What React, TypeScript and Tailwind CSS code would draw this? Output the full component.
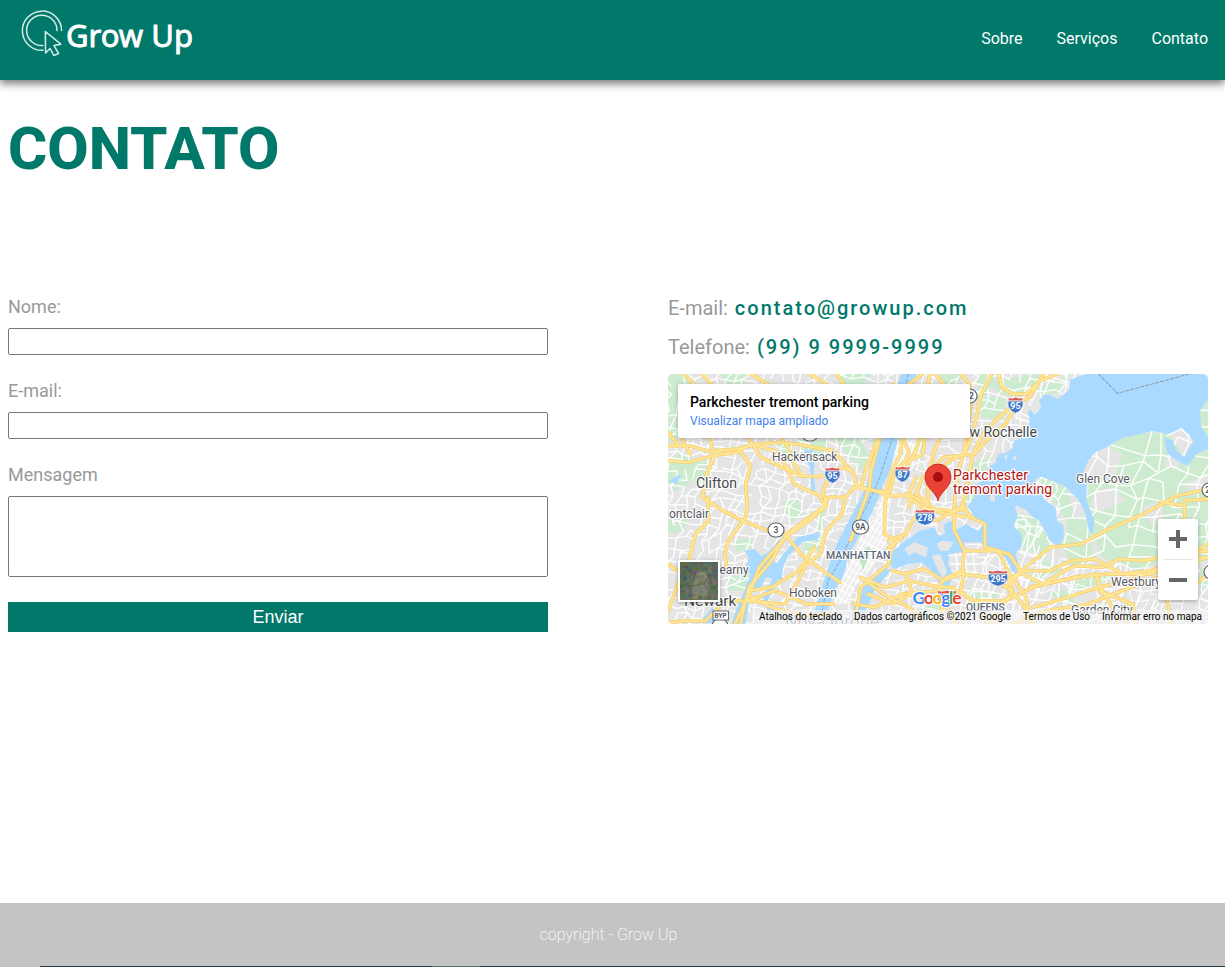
import React from "react";

/* ---------- Map geometry (drawn on a 1568 x 750 grid, scaled to 540 x 250) ---------- */

function seeded(seed: number) {
  let s = seed;
  return () => {
    s = (s * 16807) % 2147483647;
    return s / 2147483647;
  };
}

function streetMesh(x0: number, y0: number, x1: number, y1: number, step: number, keep: number, seed: number) {
  const rnd = seeded(seed);
  const rows: number[][][] = [];
  for (let y = y0; y <= y1; y += step) {
    const row: number[][] = [];
    for (let x = x0; x <= x1; x += step) {
      row.push([x + (rnd() - 0.5) * step * 0.8 - (y - y0) * 0.25, y + (rnd() - 0.5) * step * 0.8 + (x - x0) * 0.12]);
    }
    rows.push(row);
  }
  let d = "";
  rows.forEach((row, j) =>
    row.forEach((p, i) => {
      const at = (q: number[]) => `${q[0].toFixed(0)} ${q[1].toFixed(0)}`;
      if (i + 1 < row.length && rnd() < keep) d += `M${at(p)}L${at(row[i + 1])}`;
      if (j + 1 < rows.length && rnd() < keep) d += `M${at(p)}L${at(rows[j + 1][i])}`;
    })
  );
  return d;
}

const WEST_STREETS = streetMesh(-40, -160, 1240, 790, 25, 0.74, 4711);
const EAST_STREETS = streetMesh(1080, -90, 1820, 790, 46, 0.72, 977);
const QUEENS_STREETS = streetMesh(1040, 540, 1680, 790, 25, 0.55, 313);

const PARKS = [
  "M0 0H55L70 30H30V150L0 140Z", "M150 0H235L215 30H165Z", "M500 0H590L560 35H500Z",
  "M0 255L40 235L80 260L60 330L20 350L0 330Z", "M45 270L110 260L120 310L80 330Z", "M0 150L30 150L28 200L0 205Z",
  "M370 195L470 200L450 260L420 230L390 240Z", "M480 190L560 195L585 250L560 290L520 240Z", "M590 195L612 195L600 240Z",
  "M700 195L750 195L740 260L710 240Z", "M790 0L860 0L840 30H800Z", "M900 0H950L930 60L895 80Z",
  "M930 20L1080 0L1060 50L1010 70L960 60Z", "M900 70L985 70L970 140L910 130Z", "M1060 50L1170 0L1130 60L1080 60Z",
  "M890 265L945 240L920 300L895 320L880 290Z", "M860 330L905 330L885 400L860 370Z", "M640 185L690 190L670 235L640 240Z",
  "M330 385L375 370L390 420L355 450Z", "M440 400L460 395L450 460L430 490Z", "M400 490L445 480L440 530L390 540Z",
  "M0 440L60 430L45 470L0 480Z", "M190 500L240 490L245 520L200 535Z", "M300 200L350 205L370 250L340 260Z",
  "M550 550L585 510L600 520L575 590L540 600Z", "M870 640L920 660L960 650L940 700L880 690Z", "M740 700L790 690L800 740L740 740Z",
  "M1010 420L1070 430L1110 500L1090 570L1040 570L1020 520Z", "M1065 300L1160 335L1220 400L1235 560L1170 575L1140 500L1120 380L1080 360Z",
  "M1225 230L1350 180L1450 175L1500 250L1568 230V560L1450 550L1370 590L1260 550L1240 500L1215 380Z",
  "M1020 590L1100 560L1150 590L1100 600L1060 630Z", "M1180 620L1300 590L1280 620L1180 650Z", "M1540 90L1568 70V200L1545 160Z",
  "M1450 610L1568 580V640L1480 650Z", "M1110 650L1170 650L1180 690L1130 690Z", "M180 610L240 595L230 650L170 650Z"
];

/* Built-up pockets inside the north-shore parkland */
const TOWNS = [
  "M1225 230L1275 215L1320 240L1300 300L1230 330L1215 290Z", "M1240 350L1290 340L1330 380L1260 410L1225 400Z",
  "M1380 400L1430 380L1440 430L1400 450Z", "M1100 400L1130 390L1160 450L1150 500L1110 480Z", "M1160 345L1200 380L1215 440L1180 430Z",
  "M1450 230L1500 240L1480 280L1440 280Z", "M1010 520L1080 540L1090 600L1010 600Z", "M1500 330L1568 300V350L1520 360Z"
];

const WATER = [
  "M676 0H722L690 130L668 190L645 290L622 340L608 380L585 430L552 490L524 550L508 610L485 645L467 700L460 750H412L432 690L447 640L462 590L490 510L525 440L560 370L590 300L612 200L640 120Z",
  "M1215 0L1185 10L1168 18L1165 48L1130 75L1110 62L1090 62L1072 90L1078 110L1062 122L1055 105L1045 115L1050 140L1035 190L1005 200L1000 222L985 235L960 240L950 265L925 285L905 325L885 340L890 372L870 395L890 430L920 450L900 470L865 450L840 465L820 440L800 452L805 480L785 485L775 460L730 470L690 500L655 530L635 555L655 585L700 570L735 565L765 590L790 630L815 640L826 610L815 540L860 535L860 505L905 505L930 525L960 525L985 560L998 590L1012 600L1018 570L1010 540L1026 515L1028 485L1003 455L1015 430L1008 395L1035 405L1060 430L1078 440L1090 465L1110 500L1132 520L1150 490L1148 455L1130 440L1125 400L1095 380L1080 355L1065 315L1085 308L1150 335L1190 375L1212 415L1222 470L1233 480L1238 440L1215 380L1216 320L1205 300L1220 260L1240 235L1275 220L1290 210L1325 190L1375 180L1405 170L1450 180L1475 175L1490 160L1512 180L1525 200L1500 248L1475 230L1465 200L1440 188L1450 240L1485 265L1510 275L1535 240L1568 225V190L1548 160L1545 110L1568 75V0Z",
  "M285 540L340 480L330 520L300 560L335 575L330 620L285 610L265 650L225 640L240 600L225 585L235 550L220 530L250 525L270 545Z",
  "M320 560L375 490L440 475L435 495L390 505L350 545L325 600L290 680L320 720L290 710L275 670L300 620Z",
  "M200 700L235 620L265 610L240 660L225 750H185Z", "M90 745L130 700L150 750Z", "M0 320L40 300L25 330Z",
  "M395 230L418 225L425 275L420 330L410 275Z", "M412 300L424 300L428 360L417 355Z", "M625 575L645 590L600 650L570 720L540 750H520L560 650Z"
];

const ISLANDS = [
  "M685 525L715 505L755 520L750 550L715 535L700 545Z", "M780 510L795 500L830 505L815 530L790 530Z",
  "M820 540L880 530L910 570L900 610L830 600L812 570Z", "M765 545L790 540L810 590L800 615L780 580Z",
  "M935 360L950 365L948 385L935 380Z", "M975 245L985 240L983 260Z", "M1000 250L1012 245L1008 262Z",
  "M915 290L930 285L935 310L920 315Z", "M935 255L950 250L945 275Z", "M540 640L560 620L550 660Z",
  "M1055 85L1078 80L1085 100L1070 118L1055 110Z"
];

const MANHATTAN = "M668 200L720 195L725 250L660 330L640 420L640 500L600 570L540 650L520 690L480 690L500 620L540 540L560 490L600 430L620 370Z";

const MAJOR = [
  "M0 215L60 215L120 232L200 225L260 210L330 205L370 210L480 230L540 300L548 335L600 350L640 365L700 362L735 380L775 405L830 412L860 405",
  "M120 190L135 245L112 300L100 370L160 410L215 440L290 470L340 480L385 540L430 575L500 625",
  "M0 260L60 265L130 245L200 235L240 210L310 230L345 280L380 305L440 308L470 300L500 280L535 290",
  "M45 0L75 30M100 0L125 30M235 195L270 250L350 290L365 330L440 365L455 395",
  "M205 225L240 275L225 330L230 390L225 430L175 500L165 540L170 575",
  "M115 370L118 440L80 480L60 560L40 600L0 710",
  "M610 195L575 285L560 340L540 340L515 370L465 370L450 400L345 480L300 560L235 640L210 750",
  "M470 300L450 350L460 395L410 440L340 490L265 580L240 650L195 750",
  "M515 370L505 420L460 470L440 540L400 575L370 635L340 690",
  "M235 650L300 640L380 590L400 560L425 520",
  "M220 685L310 650L380 680L400 690L480 690", "M235 665L300 700L390 725L470 720", "M160 680L230 680L330 690",
  "M0 570L40 600M0 745L60 740L110 740L160 685",
  "M0 175L30 215M330 195L350 220L360 260L390 305M40 195L65 240",
  "M410 0L460 30M490 0L510 30M240 0L290 30",
  "M655 30L615 195L590 290L585 340L550 440L530 500",
  "M680 190L675 240L650 290L635 340L630 400L628 480L665 500L650 520L640 570L560 640L540 750",
  "M685 200L700 235L690 260L660 290L645 355L600 350",
  "M700 30L740 0M760 0L730 195L715 240L680 300M745 190L740 240L700 260",
  "M775 0L800 30M790 190L770 240L755 310L755 390L715 430L690 480L640 500",
  "M850 0L875 30L880 90L870 160L860 230L840 300L830 410L830 465L860 530L855 590L810 610L790 630L795 700L790 750",
  "M940 0L910 60L895 130L885 180L860 240L810 265L790 300",
  "M960 0L970 40L1000 60L1040 60L1080 20L1130 0",
  "M1090 0L1050 70L1000 95L950 140L915 180L885 240L870 320L855 395L880 430L920 450L920 520L960 530L985 590L1040 670L1050 750",
  "M1010 95L980 150L915 210L890 240L800 250L740 310L720 360L755 385",
  "M860 395L830 410L780 440L720 415M640 365L690 365L740 400L810 420L880 430",
  "M860 530L950 530L990 540L1030 600L1090 630L1150 590L1185 575L1260 580L1310 555L1380 560L1450 545L1568 530",
  "M990 620L1050 570L1110 520L1200 510L1270 470L1380 420L1480 365L1568 345",
  "M1568 375L1500 380L1500 450M1500 395L1430 385",
  "M980 640L1030 590L1110 590L1170 560L1240 555L1320 600L1400 590L1480 560L1568 550",
  "M650 590L690 600L740 585L770 600L800 620L850 600L930 610L985 640L1030 690L1060 750",
  "M560 610L630 640L700 620L790 640L820 640L890 680L980 680L1060 640L1180 610L1280 600L1400 600L1568 550",
  "M560 610L640 670L700 700L740 740M690 595L710 660L650 690L580 660M540 690L600 700L680 660L780 650",
  "M860 590L850 650L900 700L940 750M985 600L1000 650L970 700L930 750M830 640L810 700L840 750",
  "M1050 640L1160 615L1245 600L1250 630L1290 700L1310 750",
  "M1060 700L1160 670L1250 640L1330 620L1450 580M1000 750L1100 710L1220 690L1320 650L1420 610",
  "M1450 680L1460 750M1340 690L1330 750M1568 600L1520 640M1480 560L1568 510M1250 650L1350 690L1360 750",
  "M680 490L640 520M600 350L545 340M720 310L700 360L700 400"
];

function Shield({ x, y, label, wide }: { x: number; y: number; label: string; wide?: boolean }) {
  const w = wide ? 10 : 7.8;
  return (
    <g transform={`translate(${x} ${y})`}>
      <path
        d={`M${-w + 0.7} -7.6Q${-w / 2} -5.8 0 -7.8Q${w / 2} -5.8 ${w - 0.7} -7.6L${w - 0.4} -4H${-w + 0.4}Z`}
        fill="#d45b57"
        stroke="#fff"
        strokeWidth="0.7"
      />
      <path
        d={`M${-w + 0.4} -3.9H${w - 0.4}Q${w + 0.8} 1 ${w - 2.4} 4.6Q${w - 4} 6.8 0 8.3Q${-w + 4} 6.8 ${-w + 2.4} 4.6Q${-w - 0.8} 1 ${-w + 0.4} -3.9Z`}
        fill="#3c77c9"
        stroke="#fff"
        strokeWidth="0.7"
      />
      <text y="4" textAnchor="middle" fontSize="9" fontWeight="700" fill="#fff">{label}</text>
    </g>
  );
}

function RoutePill({ x, y, label }: { x: number; y: number; label: string }) {
  return (
    <g transform={`translate(${x} ${y})`}>
      <rect x="-8" y="-7" width="16" height="14" rx="7" fill="#fff" stroke="#60666b" strokeWidth="1.2" />
      <text y="3.2" textAnchor="middle" fontSize="8.5" fontWeight="500" fill="#4a4e52">{label}</text>
    </g>
  );
}

const PLACES = [
  { t: "Hackensack", x: 104, y: 87, s: 12, w: 400, c: "#55595e" },
  { t: "Clifton", x: 28, y: 114, s: 14, w: 400, c: "#44484c" },
  { t: "Montclair", x: -9.5, y: 144, s: 12, w: 400, c: "#55595e" },
  { t: "Kearny", x: 44, y: 200, s: 12, w: 400, c: "#55595e" },
  { t: "Newark", x: 16, y: 232, s: 15.5, w: 400, c: "#44484c" },
  { t: "Hoboken", x: 121, y: 223, s: 12, w: 400, c: "#55595e" },
  { t: "MANHATTAN", x: 158, y: 185, s: 10.5, w: 500, c: "#5c6878" },
  { t: "w Rochelle", x: 301.5, y: 63, s: 14, w: 400, c: "#44484c" },
  { t: "Glen Cove", x: 408, y: 109, s: 12, w: 400, c: "#55595e" },
  { t: "Westbury", x: 443, y: 212, s: 12, w: 400, c: "#55595e" },
  { t: "QUEENS", x: 298, y: 237, s: 10.2, w: 500, c: "#5c6878" },
  { t: "Garden City", x: 403, y: 240, s: 12, w: 400, c: "#55595e" },
  { t: "Nova Iorque", x: 117, y: 253.5, s: 17.5, w: 400, c: "#6b6f74" }
];

function MapDrawing() {
  return (
    <svg width="540" height="250" viewBox="0 0 540 250" className="block font-[Roboto,sans-serif]">
      <defs>
        <clipPath id="manhattan"><path d={MANHATTAN} /></clipPath>
        <pattern id="grid" width="13" height="23" patternUnits="userSpaceOnUse" patternTransform="rotate(29)">
          <rect width="13" height="23" fill="#eee" />
          <path d="M0 0H13M0 0V23" stroke="#fff" strokeWidth="8" />
        </pattern>
      </defs>
      <g transform="scale(0.34439 0.33333)" strokeLinejoin="round" strokeLinecap="round">
        <rect width="1568" height="750" fill="#e5e5e5" />
        {PARKS.map((d) => <path key={d} d={d} fill="#cdebcf" />)}
        {TOWNS.map((d) => <path key={d} d={d} fill="#e5e5e5" />)}
        <path d={EAST_STREETS} stroke="#fff" strokeWidth="4.2" fill="none" />
        <path d={QUEENS_STREETS} stroke="#fff" strokeWidth="3.2" fill="none" />
        <path d={WEST_STREETS} stroke="#fff" strokeWidth="3.8" fill="none" />
        <rect width="1568" height="750" fill="url(#grid)" clipPath="url(#manhattan)" />
        {WATER.map((d) => <path key={d} d={d} fill="#aadaff" />)}
        {ISLANDS.map((d) => <path key={d} d={d} fill="#e6e6e6" />)}
        <path d="M815 545L900 540M822 570L905 570M830 592L900 595M835 538L842 600M862 535L868 600M885 535L892 600M1450 185L1490 165L1512 185L1510 215L1498 240" stroke="#fff" strokeWidth="4" fill="none" />
        <path d="M556 553L578 517L590 525L566 590Z" fill="#bfe6c1" />
        <path d="M698 0L665 150L615 310L575 400L540 470L500 560L465 620L440 750" stroke="#8b99a8" strokeWidth="2.6" strokeDasharray="9 7" fill="none" />
        <path d="M1250 0L1305 58L1568 -15" stroke="#8b99a8" strokeWidth="3" strokeDasharray="9 6" fill="none" />
        {MAJOR.map((d) => <path key={d} d={d} stroke="#f8cd66" strokeWidth="10.6" fill="none" />)}
        {MAJOR.map((d) => <path key={d} d={d} stroke="#ffe696" strokeWidth="6.4" fill="none" />)}
      </g>
      {PLACES.map((p) => (
        <text key={p.t} x={p.x} y={p.y} fontSize={p.s} fontWeight={p.w} fill={p.c} stroke="#fff" strokeWidth="2.2" strokeLinejoin="round" paintOrder="stroke">
          {p.t}
        </text>
      ))}
      <Shield x={347.5} y={31} label="95" />
      <Shield x={164.5} y={101} label="95" />
      <Shield x={234.5} y={100} label="87" />
      <Shield x={257} y={143} label="278" wide />
      <Shield x={330} y={204} label="295" wide />
      <Shield x={279} y={224} label="" wide />
      <RoutePill x={108} y={156} label="3" />
      <RoutePill x={192.5} y={153} label="9A" />
      <RoutePill x={301} y={22} label="22" />
      <RoutePill x={142} y={60} label="" />
      <RoutePill x={542} y={116} label="25" />
      <RoutePill x={544} y={198} label="" />
      <RoutePill x={52} y={252} label="" />
      <rect x="45" y="237" width="15.5" height="9" fill="#fff" stroke="#60666b" />
      <text x="52.7" y="244.2" textAnchor="middle" fontSize="6.5" fontWeight="700" fill="#555">BYP</text>
      <path d="M270 127C268.500 118 257 114 257 103A13 13 0 0 1 283 103C283 114 271.500 118 270 127Z" fill="#ea4335" stroke="#c5221f" strokeWidth="0.8" />
      <circle cx="270" cy="103" r="5" fill="#a50e0e" />
      <g fontSize="14" fill="#b31412" stroke="#fff" strokeWidth="2.4" strokeLinejoin="round" paintOrder="stroke">
        <text x="285" y="106" textLength="75">Parkchester</text>
        <text x="285" y="120" textLength="99">tremont parking</text>
      </g>
      <text x="244.500" y="229.500" fontSize="17.500" fontWeight="700" textLength="49" stroke="#fff" strokeWidth="1.800" strokeLinejoin="round" paintOrder="stroke" className="font-[Lato,sans-serif]">
        <tspan fill="#4285f4">G</tspan><tspan fill="#ea4335">o</tspan><tspan fill="#fbbc05">o</tspan><tspan fill="#4285f4">g</tspan><tspan fill="#34a853">l</tspan><tspan fill="#ea4335">e</tspan>
      </text>
    </svg>
  );
}

function SatelliteThumb() {
  return (
    <svg width="38" height="38" viewBox="0 0 38 38" className="block">
      <defs>
        <filter id="terrain" x="0" y="0" width="100%" height="100%">
          <feTurbulence type="fractalNoise" baseFrequency="0.22" numOctaves="4" seed="8" />
          <feColorMatrix values="0.6 0 0 0 -0.04 0 0.55 0 0 0.02 0 0 0.5 0 -0.04 0 0 0 0 1" />
        </filter>
      </defs>
      <rect width="38" height="38" fill="#3a4638" />
      <path d="M0 0H17L8 12L4 25L0 30Z" fill="#1f3529" />
      <path d="M16 12L25 9L30 20L27 34L10 37L13 23Z" fill="#8b8270" opacity="0.6" />
      <path d="M38 3L32 10L30 18L38 13Z" fill="#202b58" />
      <path d="M10 9L18 4L14 15L5 29L1 38M8 25L24 22L29 28L38 24M24 22L29 12" stroke="#1b2d26" strokeWidth="1.3" fill="none" opacity="0.6" />
      <path d="M28 12L20 25L16 37M22 26L30 37" stroke="#a39c89" strokeWidth="0.7" fill="none" opacity="0.5" />
      <rect width="38" height="38" filter="url(#terrain)" opacity="0.5" />
    </svg>
  );
}

function MapCard() {
  return (
    <div className="relative mt-[15px] h-[250px] w-[540px] overflow-hidden rounded-[5px]">
      <MapDrawing />
      <div className="absolute left-[10px] top-[10px] h-[54px] w-[292px] rounded-[2px] bg-white px-3 pt-[9px] shadow-[0_1px_4px_rgba(0,0,0,0.3)]">
        <div className="text-[14px] font-medium leading-[18px] text-black">Parkchester tremont parking</div>
        <a className="block text-[12px] leading-[20px] text-[#427fed]">Visualizar mapa ampliado</a>
      </div>
      <div className="absolute left-[10px] top-[186px] border-2 border-white shadow-[0_1px_4px_rgba(0,0,0,0.3)]">
        <SatelliteThumb />
      </div>
      <div className="absolute left-[490px] top-[145px] flex h-[81px] w-10 flex-col items-center rounded-[2px] bg-white shadow-[0_1px_4px_rgba(0,0,0,0.3)]">
        <svg width="40" height="81" viewBox="0 0 40 81">
          <path d="M11 18H18V11H22V18H29V22H22V29H18V22H11Z" fill="#666" />
          <path d="M5 40.500H35" stroke="#e6e6e6" />
          <path d="M11 59H29V63H11Z" fill="#666" />
        </svg>
      </div>
      <div className="absolute bottom-0 left-[86px] flex h-[14px] w-[454px] gap-3 whitespace-nowrap bg-[#f5f5f5]/70 pl-[5px] text-[10px] leading-[14px] text-black">
        <span className="w-[83px]">Atalhos do teclado</span>
        <span className="w-[157px]">Dados cartográficos ©2021 Google</span>
        <span className="w-[67px]">Termos de Uso</span>
        <span>Informar erro no mapa</span>
      </div>
    </div>
  );
}

function Logo() {
  return (
    <svg width="180" height="56" viewBox="0 0 180 56" fill="none" className="block">
      <g stroke="#d5ebe8" strokeWidth="1.5" strokeLinejoin="round" strokeLinecap="round">
        <path d="M23 43.300A19.600 19.600 0 1 1 41.600 23.500" />
        <path d="M23 38.500A15.200 15.200 0 1 1 37 23.500" />
        <path d="M25.300 24.500L40.800 37.200L34 38.600L38.600 46.500L33.800 48.500L30 41.500L25.600 46Z" />
      </g>
      <text x="46" y="39.500" fontSize="31.500" textLength="127" lengthAdjust="spacingAndGlyphs" fill="#fff" stroke="#fff" strokeWidth="0.9" strokeLinejoin="round" className="font-['Noto_Sans',sans-serif]">Grow Up</text>
    </svg>
  );
}

function Field({ label, multiline }: { label: string; multiline?: boolean }) {
  const box = "block w-full rounded-[2px] border border-[#767676] bg-white";
  return (
    <label className="block">
      <span className="mb-[11px] block text-[18px] leading-[21px] text-[#999]">{label}</span>
      {multiline ? <textarea className={`${box} h-[81px] resize-none`} /> : <input className={`${box} h-[27px]`} />}
    </label>
  );
}

export default function App() {
  return (
    <div className="flex h-[967px] flex-col overflow-hidden bg-white font-[Roboto,sans-serif]">
      <header className="flex h-20 shrink-0 items-start justify-between bg-[#00796b] pl-5 pr-[17px] pt-[7px] shadow-[0_4px_8px_rgba(0,0,0,0.5)]">
        <Logo />
        <nav className="flex gap-[34px] pt-5 text-[16px] font-normal leading-6 text-white">
          <a>Sobre</a>
          <a>Serviços</a>
          <a>Contato</a>
        </nav>
      </header>
      <main className="flex-1 px-2 pt-[34px]">
        <h1 className="text-[60px] font-extrabold leading-[70px] text-[#00796b]">CONTATO</h1>
        <div className="mt-[112px] flex gap-[120px]">
          <form className="flex w-[540px] flex-col gap-[25px]">
            <Field label="Nome:" />
            <Field label="E-mail:" />
            <Field label="Mensagem" multiline />
            <button type="button" className="h-[30px] bg-[#00796b] font-['Liberation_Sans',sans-serif] text-[18px] leading-[30px] text-white">Enviar</button>
          </form>
          <section className="w-[540px] text-[20px] leading-6 text-[#999]">
            <p>E-mail:<span className="font-medium tracking-[2px] text-[#00796b]"> contato@growup.com</span></p>
            <p className="mt-[15px]">Telefone:<span className="font-medium tracking-[2px] text-[#00796b]"> (99) 9 9999-9999</span></p>
            <MapCard />
          </section>
        </div>
      </main>
      <footer className="h-[63px] shrink-0 bg-[#c4c4c4] pr-2 pt-[20px] text-center text-[16px] font-extralight leading-6 text-white">
        copyright - Grow Up
      </footer>
      <div className="flex h-px shrink-0 bg-[#203c46]">
        <div className="w-10 bg-[#c4c4c4]" />
        <div className="ml-[392px] w-12 bg-[#5c707a]" />
      </div>
    </div>
  );
}
